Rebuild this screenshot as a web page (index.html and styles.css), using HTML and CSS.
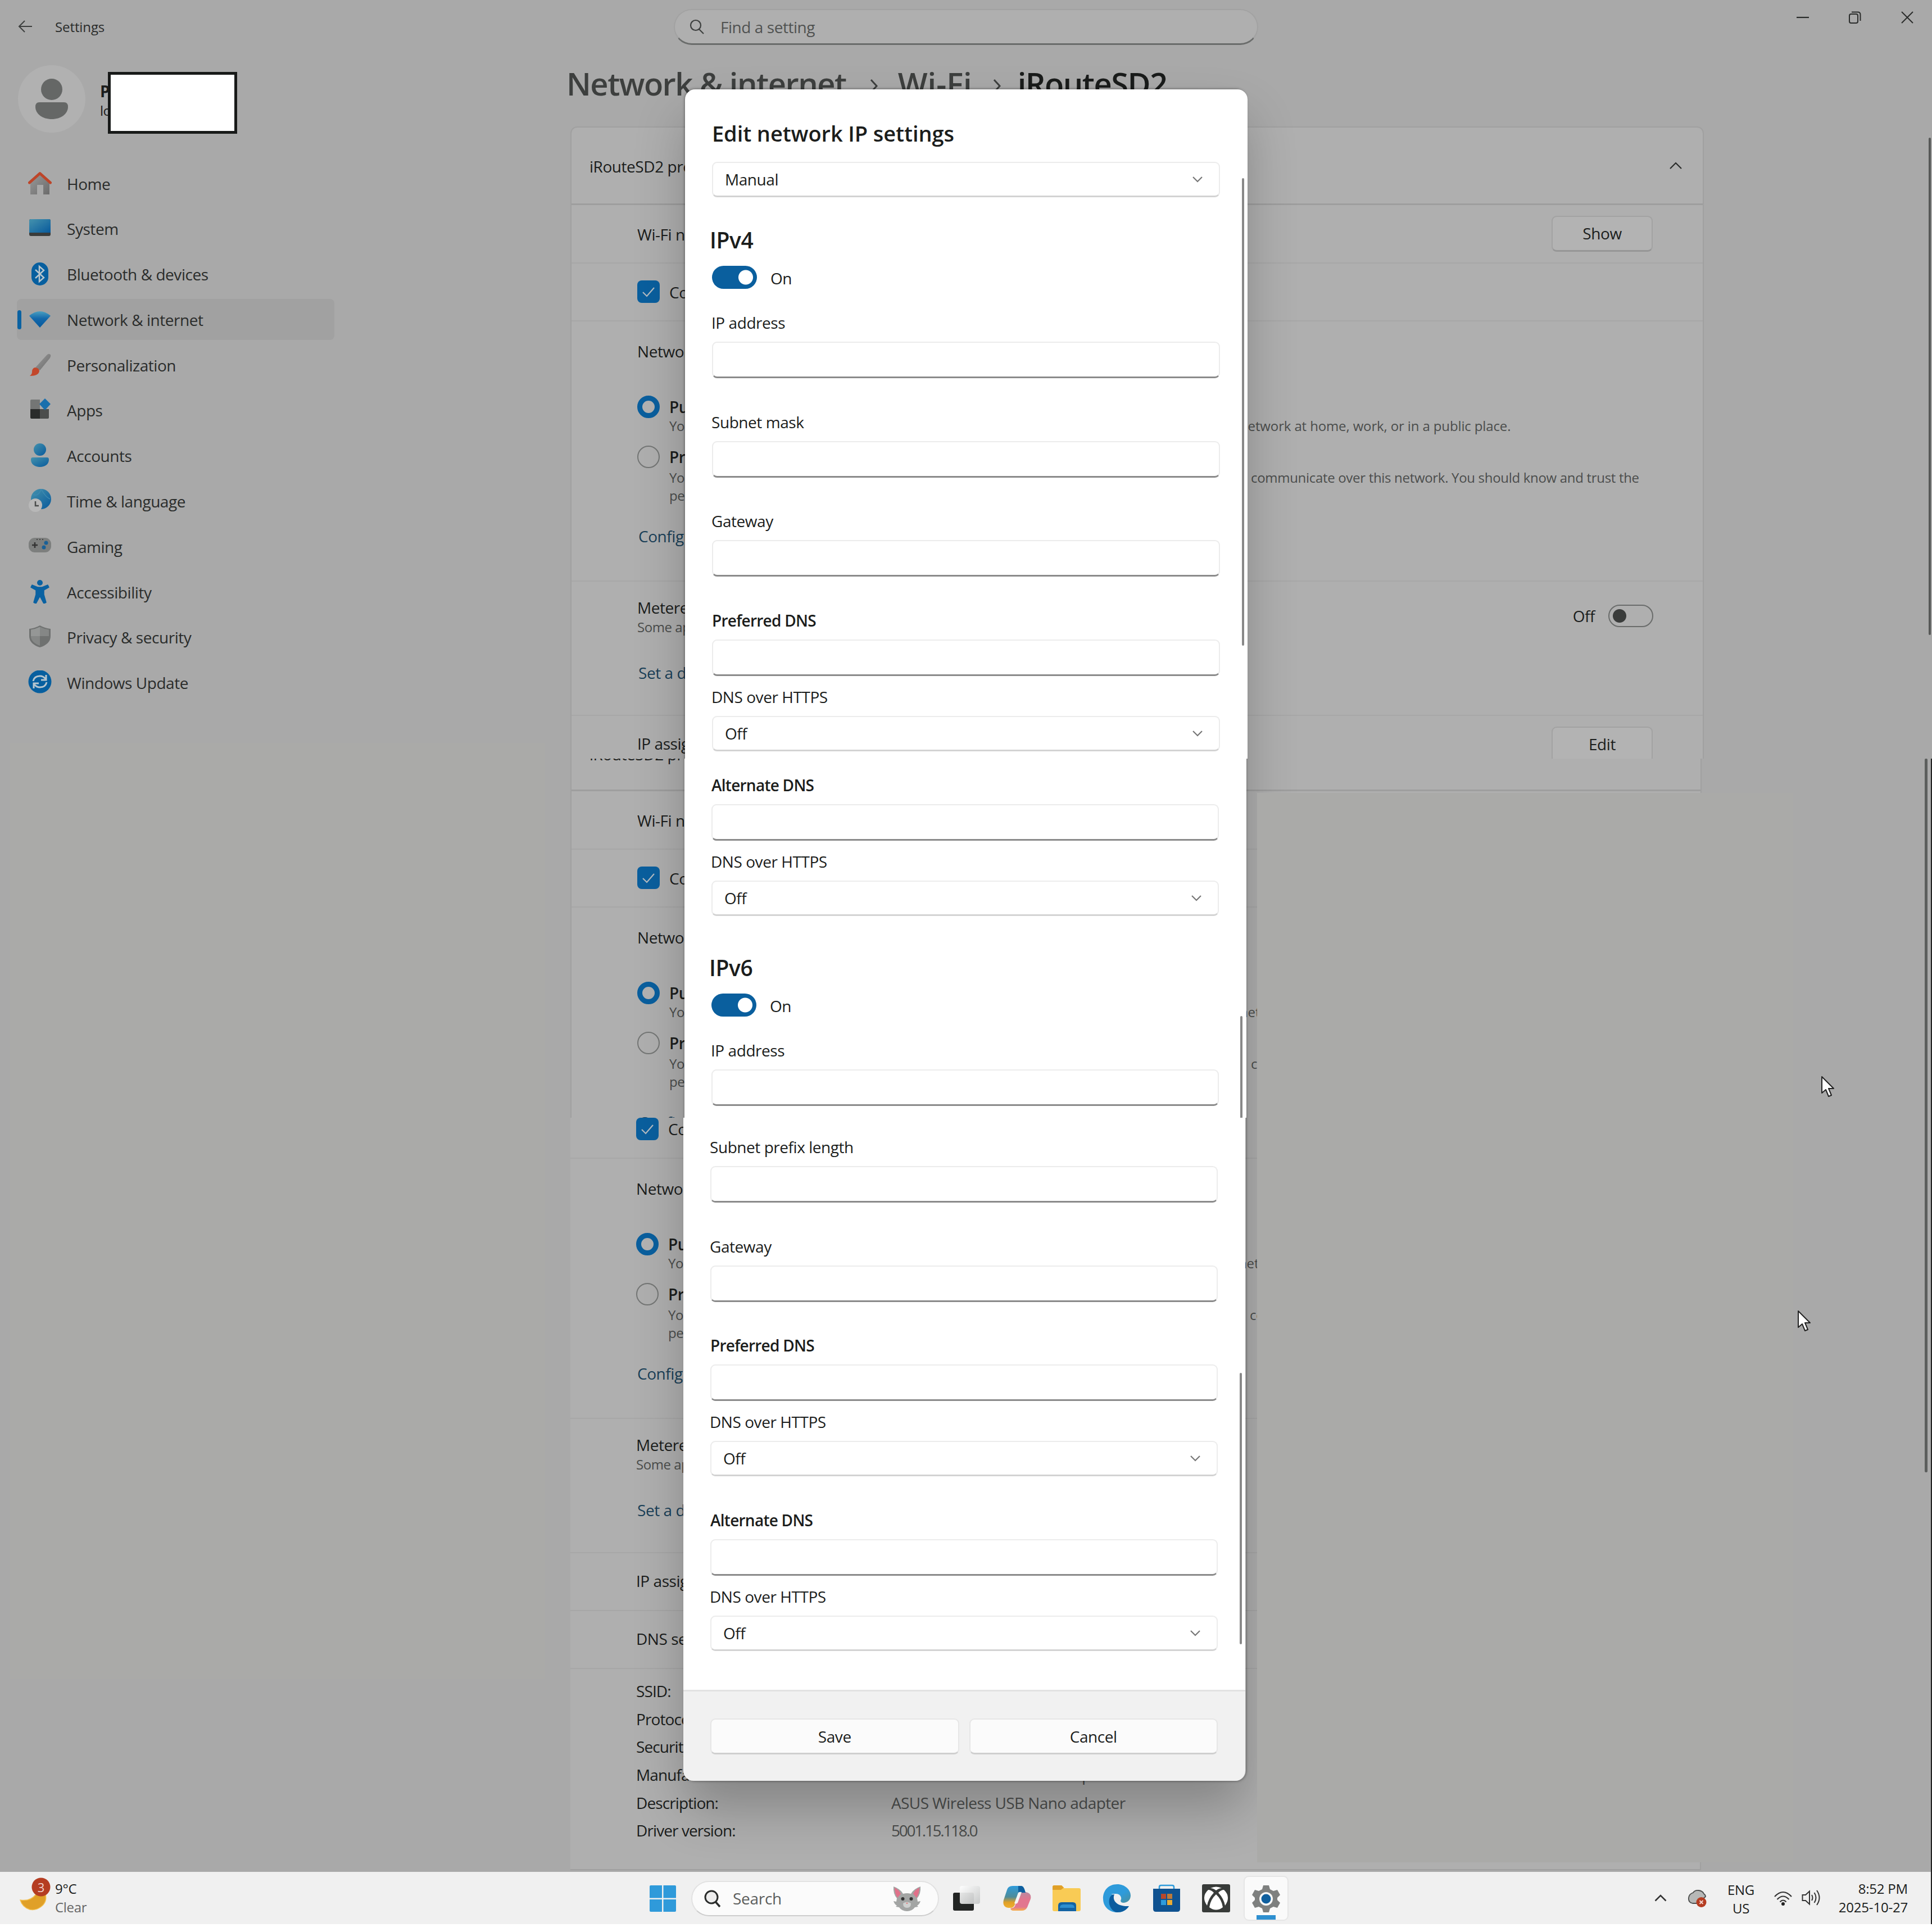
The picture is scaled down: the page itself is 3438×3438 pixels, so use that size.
FILE: index.html
```html
<!DOCTYPE html>
<html lang="en">
<head>
<meta charset="utf-8">
<title>Settings</title>
<link rel="stylesheet" href="styles.css">
</head>
<body>
<svg width="0" height="0" class="defs">
  <defs>
    <linearGradient id="gBlue" x1="0" y1="0" x2="1" y2="1"><stop offset="0" stop-color="#4592ad"/><stop offset="1" stop-color="#085a9c"/></linearGradient>
    <linearGradient id="gBlueV" x1="0" y1="0" x2="0" y2="1"><stop offset="0" stop-color="#4a9fc0"/><stop offset=".45" stop-color="#1368ab"/><stop offset="1" stop-color="#085a9c"/></linearGradient>
    <linearGradient id="gGrey" x1="0" y1="0" x2="1" y2="1"><stop offset="0" stop-color="#9a9a9a"/><stop offset="1" stop-color="#6b6b6b"/></linearGradient>
    <linearGradient id="gEdge" x1="0" y1="0" x2="1" y2="1"><stop offset="0" stop-color="#2e9bdb"/><stop offset=".6" stop-color="#2e9bdb"/><stop offset="1" stop-color="#4a8f9a"/></linearGradient>
    <linearGradient id="gGlass" x1="0" y1="0" x2="1" y2="1"><stop offset="0" stop-color="#ffffff"/><stop offset="1" stop-color="#c4c6c6"/></linearGradient>
    <linearGradient id="gCopL" x1="0" y1="0" x2="0" y2="1"><stop offset="0" stop-color="#2e9bdb"/><stop offset=".5" stop-color="#4d8c9a"/><stop offset=".75" stop-color="#e0a028"/><stop offset="1" stop-color="#f0b030"/></linearGradient>
    <linearGradient id="gCopR" x1="0" y1="0" x2="0" y2="1"><stop offset="0" stop-color="#b98aa0"/><stop offset=".4" stop-color="#e2768f"/><stop offset=".8" stop-color="#e2768f"/><stop offset="1" stop-color="#f7b04c"/></linearGradient>
    <symbol id="chev" viewBox="0 0 20 12"><path d="M2 2l8 8 8-8" fill="none" stroke="#767676" stroke-width="2.2"/></symbol>
    <symbol id="check" viewBox="0 0 40 40"><path d="M10 21l7 7 13-15" fill="none" stroke="#b4bcc2" stroke-width="2.2"/></symbol>
  </defs>
</svg>

<div class="window">
  <header class="titlebar">
    <svg class="back" width="26" height="24" viewBox="0 0 26 24"><path d="M25 12H2M12 2L2 12l10 10" fill="none" stroke="#3d3f3e" stroke-width="2"/></svg>
    <span class="app-name">Settings</span>
    <div class="find">
      <svg width="28" height="28" viewBox="0 0 28 28"><circle cx="12" cy="11" r="9" fill="none" stroke="#3d3f3e" stroke-width="2.2"/><path d="M18 18l8 8" stroke="#3d3f3e" stroke-width="2.2"/></svg>
      <span>Find a setting</span>
    </div>
    <div class="controls">
      <svg width="22" height="22" viewBox="0 0 22 22"><path d="M0 11h22" stroke="#2a2c2b" stroke-width="2.2"/></svg>
      <svg width="22" height="22" viewBox="0 0 22 22"><rect x="1" y="5" width="15" height="16" rx="3" fill="none" stroke="#2a2c2b" stroke-width="2"/><path d="M5 1.500h11q4.500 0 4.500 4.500v11" fill="none" stroke="#2a2c2b" stroke-width="2"/></svg>
      <svg width="22" height="22" viewBox="0 0 22 22"><path d="M1 1l20 20M21 1L1 21" stroke="#2a2c2b" stroke-width="2"/></svg>
    </div>
  </header>

  <div class="body">
    <aside class="sidebar">
      <div class="account">
        <svg width="120" height="122" viewBox="0 0 120 122"><circle cx="60" cy="61" r="60" fill="#b1b1b1"/><circle cx="60" cy="44" r="19" fill="#656766"/><path d="M38 67h44q7 0 7 8c0 13-13 22-29 22s-29-9-29-22q0-8 7-8z" fill="#656766"/></svg>
        <div class="who"><b>P</b><span>lo</span><div class="redact"></div></div>
      </div>
      <nav>
        <div class="item"><svg viewBox="0 0 42 42"><path d="M4 18L21 3l17 15v23H27V24H16v17H4z" fill="url(#gGrey)"/><path d="M2.500 20L21 3.500 39.500 20" fill="none" stroke="#bd4529" stroke-width="5" stroke-linecap="round" stroke-linejoin="round"/></svg>Home</div>
        <div class="item"><svg viewBox="0 0 42 42"><rect x="2" y="5" width="38" height="30" rx="3" fill="#3a3c3b"/><path d="M2 29V8q0-3 3-3h32q3 0 3 3v21z" fill="url(#gBlue)"/></svg>System</div>
        <div class="item"><svg viewBox="0 0 42 42"><rect x="6" y="1" width="30" height="41" rx="15" fill="#075f9f"/><path d="M13 14l15 14-8 7V8l8 7-15 14" fill="none" stroke="#b9c6cd" stroke-width="2.500"/></svg>Bluetooth &amp; devices</div>
        <div class="item active"><svg viewBox="0 0 42 42"><path d="M2 15Q21-1 40 15L21 36z" fill="url(#gBlueV)"/></svg>Network &amp; internet</div>
        <div class="item"><svg viewBox="0 0 42 42"><path d="M38 2q4 1 1 7L21 31l-8-5L33 4q3-3 5-2z" fill="url(#gGrey)"/><path d="M12 26q7 0 8 6-1 9-17 9 5-4 4-9 1-5 5-6z" fill="#c2472b"/></svg>Personalization</div>
        <div class="item"><svg viewBox="0 0 42 42"><path d="M4 5q0-2 2-2h15v17H4z" fill="#747675"/><path d="M4 20h17v17H6q-2 0-2-2z" fill="#2a2c2b"/><path d="M21 20h16v15q0 2-2 2H21z" fill="#4b4d4c"/><path d="M30 1l10 10-10 11-10-11z" fill="#1a70ad"/></svg>Apps</div>
        <div class="item"><svg viewBox="0 0 42 42"><circle cx="21" cy="11" r="11" fill="url(#gBlue)"/><path d="M8 25h26q3 0 3 4c0 8-7 13-16 13S5 37 5 29q0-4 3-4z" fill="url(#gBlue)"/></svg>Accounts</div>
        <div class="item"><svg viewBox="0 0 42 42"><circle cx="23" cy="18" r="18" fill="url(#gBlue)"/><path d="M9 10q10 4 14-10M23 0q8 15 16 18" fill="none" stroke="#3f8ab0" stroke-width="1.500"/><circle cx="13" cy="29" r="12" fill="#b8b8b8"/><path d="M13 22v8h6" fill="none" stroke="#4b4d4c" stroke-width="2.500"/></svg>Time &amp; language</div>
        <div class="item"><svg viewBox="0 0 42 42"><rect x="1" y="6" width="40" height="26" rx="11" fill="#7d7f7e"/><path d="M7 19h10M12 14v10" stroke="#333" stroke-width="2.500"/><circle cx="32" cy="15" r="3.500" fill="#1a6096"/><circle cx="28" cy="23" r="3.500" fill="#1a6096"/><path d="M15 9h12" stroke="#444" stroke-width="2" stroke-dasharray="2 3"/></svg>Gaming</div>
        <div class="item"><svg viewBox="0 0 42 42"><circle cx="21" cy="5" r="5" fill="#0a62a2"/><path d="M7 9l10 4h8l10-4 2 4-9 5v8l4 14-4 2-7-13-7 13-4-2 4-14v-8L5 13z" fill="#0a62a2" stroke="#0a62a2" stroke-width="1.500" stroke-linejoin="round"/></svg>Accessibility</div>
        <div class="item"><svg viewBox="0 0 42 42"><path d="M21 1q9 5 19 6v13q0 14-19 20Q2 34 2 20V7q10-1 19-6z" fill="#6f7170"/><path d="M21 3.500q8 4 16 5V20H21z" fill="#858786"/><path d="M21 20v17Q5 31 5 20z" fill="#858786"/><path d="M21 3.500V20H5V8.500q8-1 16-5z" fill="#959796"/></svg>Privacy &amp; security</div>
        <div class="item"><svg viewBox="0 0 42 42"><circle cx="21" cy="20" r="20.500" fill="#075f9f"/><path d="M9 19q2-9 12-9 6 0 10 5M33 21q-2 9-12 9-6 0-10-5" fill="none" stroke="#b7c6cf" stroke-width="3"/><path d="M32 8v9h-9M10 32v-9h9" fill="none" stroke="#b7c6cf" stroke-width="3"/></svg>Windows Update</div>
      </nav>
    </aside>

    <main>
      <h1 class="crumbs"><span class="c1">Network &amp; internet</span><svg class="a1" width="16" height="28" viewBox="0 0 16 28"><path d="M3 3l10 11L3 25" fill="none" stroke="#3d3f3e" stroke-width="3"/></svg><span class="c2">Wi-Fi</span><svg class="a2" width="16" height="28" viewBox="0 0 16 28"><path d="M3 3l10 11L3 25" fill="none" stroke="#3d3f3e" stroke-width="3"/></svg><span class="c3">iRouteSD2</span></h1>

      <section class="slice s1">
        <div class="card">
          <div class="row head"><span>iRouteSD2 prop</span><svg width="24" height="15" viewBox="0 0 24 15"><path d="M2 13L12 3l10 10" fill="none" stroke="#2a2c2b" stroke-width="2.200"/></svg></div>
          <div class="row wifi"><span>Wi-Fi net</span><button class="btn">Show</button></div>
          <div class="row"><i class="box"><svg width="40" height="40"><use href="#check"/></svg></i><span>Conn</span></div>
          <div class="profile">
            <div class="ttl">Network</div>
            <div class="opt first"><i class="radio on"></i><b>Publ</b></div>
            <div class="desc"><span>Your</span><span class="tail t1">network at home, work, or in a public place.</span></div>
            <div class="opt second"><i class="radio"></i><b>Priva</b></div>
            <div class="desc d2"><span>Your<br>peop</span><span class="tail t2">communicate over this network. You should know and trust the</span></div>
            <a class="link">Configur</a>
          </div>
          <div class="metered">
            <div><div class="ttl">Metered</div><div class="sub">Some app</div><a class="link">Set a dat</a></div>
            <div class="switch"><span>Off</span><i class="toggle off"></i></div>
          </div>
          <div class="row ip"><span>IP assign</span><button class="btn">Edit</button></div>
        </div>
      </section>

      <section class="slice s2">
        <div class="card">
          <div class="row head"><span>iRouteSD2 prop</span></div>
          <div class="row wifi"><span>Wi-Fi net</span></div>
          <div class="row"><i class="box"><svg width="40" height="40"><use href="#check"/></svg></i><span>Conn</span></div>
          <div class="profile">
            <div class="ttl">Network</div>
            <div class="opt first"><i class="radio on"></i><b>Publ</b></div>
            <div class="desc"><span>Your</span><span class="tail t1">net</span></div>
            <div class="opt second"><i class="radio"></i><b>Priva</b></div>
            <div class="desc d2"><span>Your<br>peop</span><span class="tail t2">co</span></div>
            <a class="link">Configur</a>
          </div>
        </div>
      </section>

      <section class="slice s3">
        <div class="card">
          <div class="row"><i class="box"><svg width="40" height="40"><use href="#check"/></svg></i><span>Conn</span></div>
          <div class="profile">
            <div class="ttl">Network</div>
            <div class="opt first"><i class="radio on"></i><b>Publ</b></div>
            <div class="desc"><span>Your</span><span class="tail t1">net</span></div>
            <div class="opt second"><i class="radio"></i><b>Priva</b></div>
            <div class="desc d2"><span>Your<br>peop</span><span class="tail t2">co</span></div>
            <a class="link">Configur</a>
          </div>
          <div class="metered">
            <div><div class="ttl">Metered</div><div class="sub">Some app</div><a class="link">Set a dat</a></div>
          </div>
          <div class="row ip"><span>IP assign</span></div>
          <div class="row dns"><span>DNS serv</span></div>
          <dl class="details">
            <dt>SSID:</dt><dd></dd>
            <dt>Protocol:</dt><dd></dd>
            <dt>Security</dt><dd></dd>
            <dt>Manufac</dt><dd>Realtek Semiconductor Corp.</dd>
            <dt>Description:</dt><dd>ASUS Wireless USB Nano adapter</dd>
            <dt>Driver version:</dt><dd class="version">5001.15.118.0</dd>
          </dl>
        </div>
      </section>
    </main>
  </div>

  <div class="shadow"></div>
  <div class="patch left"></div>
  <div class="patch right"></div>
  <div class="bar w1"></div>
  <div class="bar w2"></div>
  <div class="edge"></div>
  <svg class="cursor k1" width="26" height="40" viewBox="0 0 26 40"><path d="M2 2v29l7-6 5 12 5-2-5-12h9z" fill="#fff" stroke="#222" stroke-width="2" stroke-linejoin="round"/></svg>
  <svg class="cursor k2" width="26" height="40" viewBox="0 0 26 40"><path d="M2 2v29l7-6 5 12 5-2-5-12h9z" fill="#fff" stroke="#222" stroke-width="2" stroke-linejoin="round"/></svg>

  <div class="dialog">
    <section class="part p1">
      <h2 class="title">Edit network IP settings</h2>
      <div class="select manual"><span>Manual</span><svg width="20" height="12"><use href="#chev"/></svg></div>
      <h3>IPv4</h3>
      <div class="power"><i class="toggle"></i><span>On</span></div>
      <label class="after-power">IP address</label><div class="input"></div>
      <label>Subnet mask</label><div class="input"></div>
      <label>Gateway</label><div class="input"></div>
      <label class="strong">Preferred DNS</label><div class="input"></div>
      <label class="near">DNS over HTTPS</label><div class="select"><span>Off</span><svg width="20" height="12"><use href="#chev"/></svg></div>
      <div class="bar"></div>
    </section>
    <section class="part p2">
      <label class="strong">Alternate DNS</label><div class="input"></div>
      <label class="near">DNS over HTTPS</label><div class="select"><span>Off</span><svg width="20" height="12"><use href="#chev"/></svg></div>
      <h3>IPv6</h3>
      <div class="power"><i class="toggle"></i><span>On</span></div>
      <label class="after-power">IP address</label><div class="input"></div>
      <div class="bar"></div>
    </section>
    <section class="part p3">
      <label>Subnet prefix length</label><div class="input"></div>
      <label>Gateway</label><div class="input"></div>
      <label class="strong">Preferred DNS</label><div class="input"></div>
      <label class="near">DNS over HTTPS</label><div class="select"><span>Off</span><svg width="20" height="12"><use href="#chev"/></svg></div>
      <label class="strong">Alternate DNS</label><div class="input"></div>
      <label class="near">DNS over HTTPS</label><div class="select"><span>Off</span><svg width="20" height="12"><use href="#chev"/></svg></div>
      <div class="bar"></div>
    </section>
    <footer><button>Save</button><button>Cancel</button></footer>
  </div>
</div>

<div class="taskbar">
  <div class="weather">
    <svg width="60" height="64" viewBox="0 0 60 64"><path d="M5 41q18 3 28-10h17q3 14-8 22-9 7-20 5Q9 54 5 41z" fill="#e0a028" stroke="#f3bf4e" stroke-width="1.500" stroke-linejoin="round"/><circle cx="42" cy="18" r="16.500" fill="#b53d22"/><text x="42" y="26.500" text-anchor="middle" class="badge">3</text></svg>
    <div class="two"><span>9°C</span><span class="dim">Clear</span></div>
  </div>
  <div class="center">
    <svg class="start" width="47" height="47" viewBox="0 0 47 47"><path d="M2 0h20v22.500H0V2q0-2 2-2zM24.500 0H45q2 0 2 2v20.500H24.500zM0 25h22v22H2q-2 0-2-2zM24.500 25H47v20q0 2-2 2H24.500z" fill="#2f9ada"/></svg>
    <div class="tsearch">
      <svg width="32" height="34" viewBox="0 0 32 34"><circle cx="14" cy="14" r="11" fill="#ededed" stroke="#2a2c2b" stroke-width="3"/><path d="M21 22l8 9" stroke="#2a2c2b" stroke-width="3.500"/></svg>
      <span>Search</span>
      <svg class="cat" width="50" height="44" viewBox="0 0 50 44"><path d="M1 0q12 4 17 13 7-2 14 0Q37 4 49 0q1 13-6 21l1 6 5-1q-2 6-6 8l2 2-6 1q-5 7-14 7t-14-7l-6-1 2-2q-4-2-6-8l5 1 1-6Q0 13 1 0z" fill="#a3a5a4"/><path d="M3 2q8 4 11 11l-6 7Q3 12 3 2zM47 2q-8 4-11 11l6 7q5-8 5-18z" fill="#e0718a"/><circle cx="17.500" cy="22" r="3" fill="#333"/><circle cx="32.500" cy="22" r="3" fill="#333"/><path d="M18 30q7-5 14 0 0 8-7 8t-7-8z" fill="#cfd1d0"/><path d="M23 29h4l-2 2z" fill="#d66"/></svg>
    </div>
    <div class="apps">
      <svg viewBox="0 0 50 50"><rect x="0" y="15" width="37" height="32" rx="3" fill="#222423"/><rect x="12" y="3" width="36" height="32" rx="4" fill="url(#gGlass)" opacity=".93"/></svg>
      <svg viewBox="0 0 50 50"><path d="M17 3h15q4 0 6 6l2 6h-7q-6 0-8 8l-4 13q-2 6-8 6H9Q-2 40 1 28L7 10Q9 3 17 3z" fill="url(#gCopL)"/><path d="M33 47H18q-4 0-5-4l4-1q4-1 5-6l5-16q2-6 8-6h6q10 2 8 12l-6 15q-3 6-10 6z" fill="url(#gCopR)"/><path d="M27 3h5q4 0 6 6l2 6h-7q-4 0-6 3z" fill="#0f5f9e"/><path d="M20 34l7-19q2-2 6-1l-7 19q-2 3-6 1z" fill="#f4f4f4"/></svg>
      <svg viewBox="0 0 50 50"><path d="M0 5q0-3 3-3h13l5 5h26q3 0 3 3v35q0 3-3 3H3q-3 0-3-3z" fill="#f9cb55"/><path d="M0 5q0-3 3-3h13l4 4-5 4H0z" fill="#e0a028"/><path d="M10 48V38q0-6 6-6h20q6 0 6 6v10z" fill="#1363a3"/><path d="M13 42q0-6 6-6h14q6 0 6 6z" fill="#2e8fd0"/></svg>
      <svg viewBox="0 0 50 50"><path d="M1 27C0 11 11 0 26 0c14 0 24 10 24 20 0 8-6 13-13 13-4 0-6-3-4-6 1-4-2-10-9-10C13 16 3 22 1 27z" fill="url(#gEdge)"/><path d="M1 26c2-6 9-10 17-8-5 6-5 18 4 24 7 4 18 3 25-3-5 8-13 11-21 11C12 50 1 40 1 26z" fill="#2e9bdb"/><path d="M12 27c1-6 5-9 9-9-4 9 2 22 26 21-5 8-13 11-21 11-9-1-16-12-14-23z" fill="#0b5c9e"/></svg>
      <svg viewBox="0 0 50 50"><path d="M12 9V5q0-3 3-3h20q3 0 3 3v4" fill="none" stroke="#2e9bdb" stroke-width="2.500"/><path d="M1 8h48v36q0 5-5 5H6q-5 0-5-5z" fill="#0f5290"/><rect x="15" y="17" width="9" height="9" fill="#b9472a"/><rect x="26" y="17" width="9" height="9" fill="#bd7a3a"/><rect x="15" y="28" width="9" height="9" fill="#2e9bdb"/><rect x="26" y="28" width="9" height="9" fill="#e9ac34"/></svg>
      <svg viewBox="0 0 50 50"><rect width="50" height="50" rx="3" fill="#383b39"/><path d="M15 7q10-5 20 0-5 0-10 4-5-4-10-4zM11 10q5 0 10 5Q11 26 9 38-2 22 11 10zM39 10q-5 0-10 5 10 11 12 23Q52 22 39 10zM25 18q10 9 12 23-12 9-24 0 2-14 12-23z" fill="#fff"/></svg>
      <div class="running"><svg viewBox="0 0 50 50"><path d="M20 1h10l2 7 6 3 7-2 5 9-5 5v4l5 5-5 9-7-2-6 3-2 7H20l-2-7-6-3-7 2-5-9 5-5v-4l-5-5 5-9 7 2 6-3z" fill="#7e807f"/><circle cx="25" cy="25" r="12" fill="#f7f7f7"/><circle cx="25" cy="25" r="8.500" fill="#0f5f9e"/></svg></div>
    </div>
  </div>
  <div class="tray">
    <svg class="up" width="22" height="14" viewBox="0 0 22 14"><path d="M1.500 12.500L11 3l9.500 9.500" fill="none" stroke="#333" stroke-width="2.600"/></svg>
    <svg class="cloud" width="34" height="34" viewBox="0 0 34 34"><path d="M8 25q-8-2-7-10 1-7 8-9 3-5 10-4 7 1 9 6 3 2 3 5L17 25z" fill="#b6b8b7" stroke="#4b4d4c" stroke-width="1.800"/><circle cx="23.500" cy="23" r="9" fill="#b53d22"/><path d="M20.500 20l6 6M26.500 20l-6 6" stroke="#f4d5cf" stroke-width="2"/></svg>
    <div class="lang"><span>ENG</span><span>US</span></div>
    <svg class="wifi-i" width="34" height="28" viewBox="0 0 34 28"><path d="M2 11Q17-5 32 11M6.500 16q10.500-11 21 0M11.500 20.500q5.500-6 11 0" fill="none" stroke="#333" stroke-width="2.200"/><circle cx="17" cy="24" r="3" fill="#222"/></svg>
    <svg class="vol" width="34" height="30" viewBox="0 0 34 30"><path d="M1.500 10v10H7l7 6.500v-23L7 10z" fill="none" stroke="#333" stroke-width="2"/><path d="M18 10q3 5 0 10M22.500 6q6 9 0 18M27 2q9 13 0 26" fill="none" stroke="#333" stroke-width="2"/></svg>
    <div class="clock"><span>8:52 PM</span><span>2025-10-27</span></div>
  </div>
</div>
</body>
</html>
```
FILE: styles.css
```css
* { box-sizing: border-box; margin: 0; padding: 0; }
body {
  width: 3438px; height: 3438px; overflow: hidden; background: #fff;
  font: 28px/38px "Open Sans", "Noto Sans", sans-serif;
  letter-spacing: -0.45px; color: #1b1d1c;
}
i { font-style: normal; }
b { font-weight: 600; }
button { font: inherit; letter-spacing: inherit; color: inherit; }
.defs { position: absolute; }

/* Window */
.window { position: relative; width: 3438px; height: 3331px; background: #a9a9a9; overflow: hidden; }
.titlebar { display: flex; height: 96px; padding: 16px 33px 0 32px; align-items: flex-start; }
.back { margin-top: 19px; }
.app-name { font-size: 24px; width: 1101px; margin: 13px 0 0 40px; color: #2a2c2b; letter-spacing: -0.1px; }
.find {
  display: flex; align-items: center; gap: 28px; width: 1040px; height: 64px; padding-left: 25px;
  border: 2px solid #a2a2a2; border-bottom: 3px solid #6a6c6b; border-radius: 32px; background: #afafaf; color: #505251;
}
.controls { display: flex; gap: 71px; margin: 4px 0 0 auto; }
.body { display: flex; }

/* Sidebar */
.sidebar { width: 1015px; padding: 19px 0 0 30px; }
.account { display: flex; height: 175px; padding-left: 2px; }
.who { position: relative; display: flex; flex-direction: column; padding: 27px 0 0 26px; color: #1b1d1c; }
.who b { line-height: 40px; font-weight: 700; }
.who span { font-size: 24px; line-height: 30px; }
.redact { position: absolute; left: 40px; top: 13px; width: 230px; height: 110px; background: #fff; border: 5px solid #181a19; }
nav { display: flex; flex-direction: column; gap: 7.800px; }
.item { display: flex; align-items: center; width: 565px; height: 73px; padding-left: 20px; gap: 27px; border-radius: 8px; color: #2a2c2b; }
.item svg { width: 42px; height: 42px; margin-top: -2px; }
.item.active { background: #a1a1a1; padding-left: 12px; }
.item.active::before { content: ""; width: 7px; height: 34px; margin: 0 -15px 0 -11px; border-radius: 4px; background: #0a62a2; }

/* Main column */
main { width: 2423px; padding-top: 14px; }
.crumbs { display: flex; height: 115px; align-items: flex-start; font-size: 56px; line-height: 76px; font-weight: 600; color: #3d3f3e; letter-spacing: -1.500px; margin-left: -7px; }
.crumbs .a1 { margin: 29px 35px 0 41px; }
.crumbs .a2 { margin: 29px 29px 0 36px; }
.crumbs .c2 { letter-spacing: 0; }
.crumbs .c3 { color: #1a1c1b; }
.slice { overflow: hidden; }
.s1 { height: 1125px; }
.s2 { height: 639px; }
.s3 { height: 1342px; }
.card { width: 2017px; background: #afafaf; border: 2px solid #a0a0a0; }
.s1 .card { border-radius: 12px 12px 0 0; height: 1200px; }
.s2 .card { margin-top: -82px; width: 2013px; height: 800px; }
.s3 .card { margin: -33px 0 0 -2px; width: 2014px; height: 1372px; }
.row { display: flex; align-items: center; gap: 17px; height: 103.500px; padding: 0 88px 0 117px; border-bottom: 2px solid #a7a7a7; white-space: nowrap; }
.row > span { flex: 1; margin-top: 1px; }
.row.head { height: 138px; padding: 0 36px 0 32px; border-bottom: 3px solid #9e9e9e; }
.row.head span { margin-top: 3px; }
.s2 .row.head span { margin-top: 9px; }
.row.wifi > span { margin-top: 3px; }
.row .btn { flex: none; }
.btn { width: 180px; height: 64px; border: 2px solid #a2a2a2; border-bottom: 3px solid #969696; border-radius: 9px; background: #b3b3b3; }
.wifi .btn { margin-right: 1px; }
.ip .btn { margin-right: 1px; }
.box { width: 40px; height: 40px; border-radius: 8px; background: #0a5f9e; }
.box svg { display: block; }
.profile { height: 463px; padding: 34px 0 0 117px; border-bottom: 2px solid #a7a7a7; }
.opt { display: flex; align-items: center; gap: 17px; height: 40px; }
.opt.first { margin-top: 60px; }
.opt.second { margin-top: 19px; }
.radio { width: 40px; height: 40px; border: 2px solid #747675; border-radius: 50%; }
.radio.on { border: 9px solid #0a5f9e; background: #b3b3b3; }
.desc { display: flex; margin: -2px 0 0 57px; font-size: 24px; line-height: 32px; color: #4b4d4c; white-space: nowrap; }
.desc > span:first-child { width: 1015px; }
.desc.d2 { margin-top: 1px; }
.t1 { letter-spacing: -0.13px; }
.t2 { margin-left: 20px; letter-spacing: -0.31px; }
.link { display: block; color: #1a4058; margin: 37px 0 0 2px; }
.metered { display: flex; justify-content: space-between; height: 239px; padding: 27px 88px 0 117px; border-bottom: 2px solid #a7a7a7; }
.sub { font-size: 24px; line-height: 32px; color: #4b4d4c; }
.metered .link { margin-top: 46px; }
.switch { display: flex; gap: 24px; height: 40px; margin-top: 14px; align-items: center; }
.toggle { display: block; width: 80px; height: 41px; border-radius: 21px; background: radial-gradient(circle at 60px 50%, #fff 12.500px, transparent 13.500px), #0a5f9e; }
.toggle.off { height: 40px; border: 2px solid #6a6c6b; background: radial-gradient(circle at 18px 50%, #3a3c3b 11.500px, transparent 12.500px); }
.ip { height: 103px; }
.ip > span, .dns > span { margin-top: -3px; }
.details { display: grid; grid-template-columns: 454px 1fr; grid-auto-rows: 49.700px; padding: 20px 0 0 117px; align-items: start; }
dt { letter-spacing: -0.9px; }
dd { color: #4b4d4c; letter-spacing: -0.6px; }
dd.version { letter-spacing: -2.300px; }

/* Layers over the window */
.shadow { position: absolute; left: 1219px; top: 159px; width: 998px; height: 3010px; border-radius: 18px; box-shadow: 0 50px 90px rgba(0,0,0,.24), 0 0 5px rgba(0,0,0,.5); }
.patch { position: absolute; background: #aaaaa8; }
.patch.left { left: 17px; top: 1322px; width: 953px; height: 1665px; }
.patch.right { left: 2237px; top: 1411px; width: 954px; height: 1903px; }
.bar { position: absolute; width: 4px; border-radius: 2px; background: #888; }
.w1 { left: 3432px; top: 245px; height: 885px; background: #565857; }
.w2 { left: 3425px; top: 1350px; width: 5px; height: 1270px; background: #5c5e5d; }
.edge { position: absolute; right: 0; top: 1350px; width: 2px; height: 1981px; background: #222; }
.cursor { position: absolute; }
.k1 { left: 3240px; top: 1914px; }
.k2 { left: 3198px; top: 2331px; }

/* Dialog */
.dialog { position: absolute; left: 1216px; top: 159px; width: 1004px; color: #1b1d1c; }
.part { position: relative; background: #fff; overflow: hidden; }
.p1 { margin-left: 3px; width: 1001px; height: 1191px; padding: 52px 49px 0 48px; border-radius: 18px 18px 0 0; }
.p2 { margin-left: 2px; width: 1000px; height: 639px; padding: 28px 49px 0 48px; }
.p3 { width: 1000px; height: 1018px; padding: 33px 49px 0 48px; }
.title { font-size: 38px; line-height: 52px; font-weight: 600; letter-spacing: -0.1px; white-space: nowrap; margin-bottom: 25px; }
h3 { font-size: 39px; line-height: 52px; font-weight: 600; margin: 50px 0 20px -4px; letter-spacing: -0.4px; }
.p2 h3 { margin-top: 66px; }
.power { display: flex; gap: 24px; height: 41px; }
.power span { margin-top: 3px; }
.part label { display: block; margin: 58.500px 0 15px -1px; }
.part > label:first-child { margin-top: 0; }
.part label.after-power { margin-top: 41px; }
.part label.near { margin-top: 18px; }
.part label.strong { letter-spacing: -0.75px; margin-left: 0; font-weight: 600; }
.input { height: 65px; border: 2px solid #ececec; border-bottom: 3px solid #8a8a8a; border-radius: 9px; }
.select { display: flex; justify-content: space-between; align-items: center; height: 63px; padding: 0 28px 0 21px; border: 2px solid #ececec; border-bottom: 3px solid #d3d3d3; border-radius: 9px; }
.p1 .bar { left: 991px; top: 158px; height: 832px; }
.p2 .bar { left: 989px; top: 458px; height: 181px; border-radius: 2px 2px 0 0; }
.p3 .bar { left: 990px; top: 454px; height: 483px; }
footer { display: flex; gap: 18px; width: 1000px; height: 162px; padding: 48px 49px 0 48px; border-top: 3px solid #e2e2e2; border-radius: 0 0 18px 18px; background: #f1f1f1; }
footer button { flex: 1; height: 64px; border: 2px solid #e6e6e6; border-bottom: 3px solid #cfcfcf; border-radius: 9px; background: #fbfbfb; }

/* Taskbar */
.taskbar { position: relative; display: flex; justify-content: space-between; width: 3438px; height: 93px; background: #f0f0f0; font-size: 24px; line-height: 33px; letter-spacing: -0.300px; border-right: 2px solid #222; }
.weather { display: flex; gap: 7px; width: 1156px; padding: 9px 0 0 31px; }
.badge { font-size: 22px; fill: #f0d5d0; }
.two, .lang, .clock { display: flex; flex-direction: column; padding-top: 4px; }
.dim { color: #666; }
.center { display: flex; flex: 1; }
.start { margin-top: 24px; }
.tsearch { display: flex; align-items: center; width: 441px; height: 63px; margin: 16px 0 0 27px; padding: 0 30px 0 20px; border: 2px solid #e2e2e2; border-bottom-color: #cdcdcd; border-radius: 32px; background: #fbfbfb; font-size: 28px; color: #5c5e5d; }
.tsearch span { margin-left: 20px; }
.cat { margin-left: auto; }
.apps { display: flex; gap: 38.700px; margin: 22px 0 0 25px; }
.apps svg { width: 50px; height: 50px; flex: none; }
.running { display: flex; justify-content: center; width: 80px; height: 80px; margin: -15px 0 0 -15px; padding-top: 14px; border: 2px solid #e6e6e6; border-radius: 9px; background: linear-gradient(#2e8fd0, #2e8fd0) 50% 100% / 34px 8px no-repeat, #fafafa; }
.tray { display: flex; align-items: flex-start; padding: 12px 41px 0 0; }
.tray .up { margin: 27px 38px 0 0; }
.tray .cloud { margin: 19px 35px 0 0; }
.lang { align-items: center; width: 50px; padding-top: 3px; }
.wifi-i { margin: 21px 16px 0 33px; }
.vol { margin-top: 19px; }
.clock { width: 155px; align-items: flex-end; padding-top: 1px; letter-spacing: -0.2px; }
```
